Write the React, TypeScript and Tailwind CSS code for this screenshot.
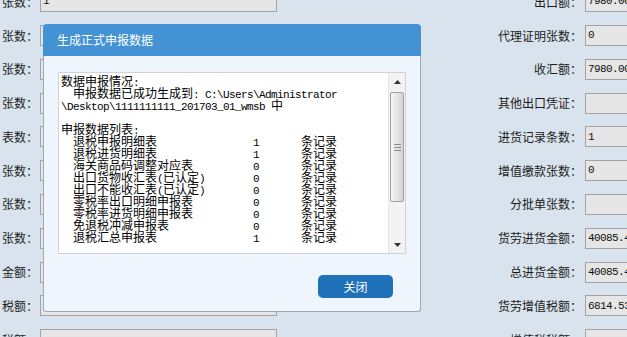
import type { ReactNode } from "react";

const ROWS = [
  { l: "张数：", lv: "1", r: "出口额：", rv: "7980.00" },
  { l: "张数：", lv: "1", r: "代理证明张数：", rv: "0" },
  { l: "张数：", lv: "1", r: "收汇额：", rv: "7980.00" },
  { l: "张数：", lv: "1", r: "其他出口凭证：", rv: "" },
  { l: "表数：", lv: "", r: "进货记录条数：", rv: "1" },
  { l: "张数：", lv: "1", r: "增值缴款张数：", rv: "0" },
  { l: "张数：", lv: "1", r: "分批单张数：", rv: "" },
  { l: "张数：", lv: "1", r: "货劳进货金额：", rv: "40085.47" },
  { l: "金额：", lv: "", r: "总进货金额：", rv: "40085.47" },
  { l: "税额：", lv: "1", r: "货劳增值税额：", rv: "6814.53" },
  { l: "税额：", lv: "", r: "增值税税额：", rv: "" },
];

function M({ children }: { children: ReactNode }) {
  return <span className="font-['Liberation_Mono'] text-[11px] tracking-[-0.6px] whitespace-pre">{children}</span>;
}

const LIST: { name: ReactNode; n: string }[] = [
  { name: "退税申报明细表", n: "1" },
  { name: "退税进货明细表", n: "1" },
  { name: "海关商品码调整对应表", n: "0" },
  { name: <>出口货物收汇表<M>(</M>已认定<M>)</M></>, n: "0" },
  { name: <>出口不能收汇表<M>(</M>已认定<M>)</M></>, n: "0" },
  { name: "零税率出口明细申报表", n: "0" },
  { name: "零税率进货明细申报表", n: "0" },
  { name: "免退税冲减申报表", n: "0" },
  { name: "退税汇总申报表", n: "1" },
];

function Field({ value, className }: { value: string; className: string }) {
  return (
    <div className={`h-[21px] shrink-0 border border-[#a3a3a3] bg-[#e6e6e6] flex items-center pl-[2px] text-[#111] ${className}`}>
      <M>{value}</M>
    </div>
  );
}

export default function App() {
  return (
    <div className="relative w-[627px] h-[337px] overflow-hidden bg-[#d9e3ed] font-['Noto_Sans_CJK_SC',sans-serif] text-[12px] text-[#1c1c1c]">
      {/* form behind the dialog */}
      <div className="w-[665px] -mt-[15.2px]">
        {ROWS.map((row, i) => (
          <div key={i} className="h-[33.8px] flex items-center">
            <div className="w-[38px] flex justify-end overflow-hidden whitespace-nowrap">{row.l}</div>
            <Field value={row.lv} className="ml-[2px] w-[237px]" />
            <div className="flex-1 flex justify-end whitespace-nowrap">{row.r}</div>
            <Field value={row.rv} className="ml-[3px] w-[80px]" />
          </div>
        ))}
      </div>

      {/* dialog */}
      <div className="absolute left-[43px] top-[24px] w-[378px] h-[288px] flex flex-col">
        <div className="h-[32px] shrink-0 bg-[#4393d4] rounded-t-[4px] flex items-center pl-[14px] text-white text-[12px]">
          生成正式申报数据
        </div>
        <div className="flex-1 flex flex-col bg-[#eef5fd] border-x border-b border-[#9fa9b4] rounded-b-[3px]">
          <div className="mt-[16px] mx-[14px] h-[182px] border border-[#cfd3d8] bg-white flex">
            <div className="flex-1 pt-[2px] pl-[2px] leading-[12px] text-black whitespace-nowrap overflow-hidden">
              <div className="h-[12px]">数据申报情况<M>:</M></div>
              <div className="h-[12px] pl-[12px]">申报数据已成功生成到<M>: C:\Users\Administrator</M></div>
              <div className="h-[12px]"><M>\Desktop\1111111111_201703_01_wmsb </M>中</div>
              <div className="h-[12px]" />
              <div className="h-[12px]">申报数据列表<M>:</M></div>
              {LIST.map((it, i) => (
                <div key={i} className="h-[12px] flex">
                  <span className="ml-[12px] w-[180px]">{it.name}</span>
                  <span className="w-[48px]"><M>{it.n}</M></span>
                  <span>条记录</span>
                </div>
              ))}
            </div>
            {/* scrollbar */}
            <div className="w-[17px] shrink-0 flex flex-col bg-[#f3f3f3] border-l border-[#e6e6e6]">
              <div className="h-[17px] flex items-center justify-center">
                <svg width="7" height="4" viewBox="0 0 7 4"><polygon points="0,4 3.5,0 7,4" fill="#333" /></svg>
              </div>
              <div className="flex-1 pt-[2px]">
                <div className="mx-[1px] h-[110px] rounded-[2px] border border-[#a0a0a0] bg-gradient-to-r from-[#f7f7f7] to-[#d2d2d2] flex flex-col items-center justify-center gap-[2px]">
                  <div className="w-[7px] h-px bg-[#8a8a8a]" />
                  <div className="w-[7px] h-px bg-[#8a8a8a]" />
                  <div className="w-[7px] h-px bg-[#8a8a8a]" />
                </div>
              </div>
              <div className="h-[17px] flex items-center justify-center">
                <svg width="7" height="4" viewBox="0 0 7 4"><polygon points="0,0 7,0 3.5,4" fill="#333" /></svg>
              </div>
            </div>
          </div>
          <div className="flex justify-end mt-[21px] mr-[27px]">
            <button className="w-[75px] h-[23px] rounded-[5px] bg-[#1f71b9] text-white text-[12px] flex items-center justify-center">
              关闭
            </button>
          </div>
        </div>
      </div>
    </div>
  );
}
